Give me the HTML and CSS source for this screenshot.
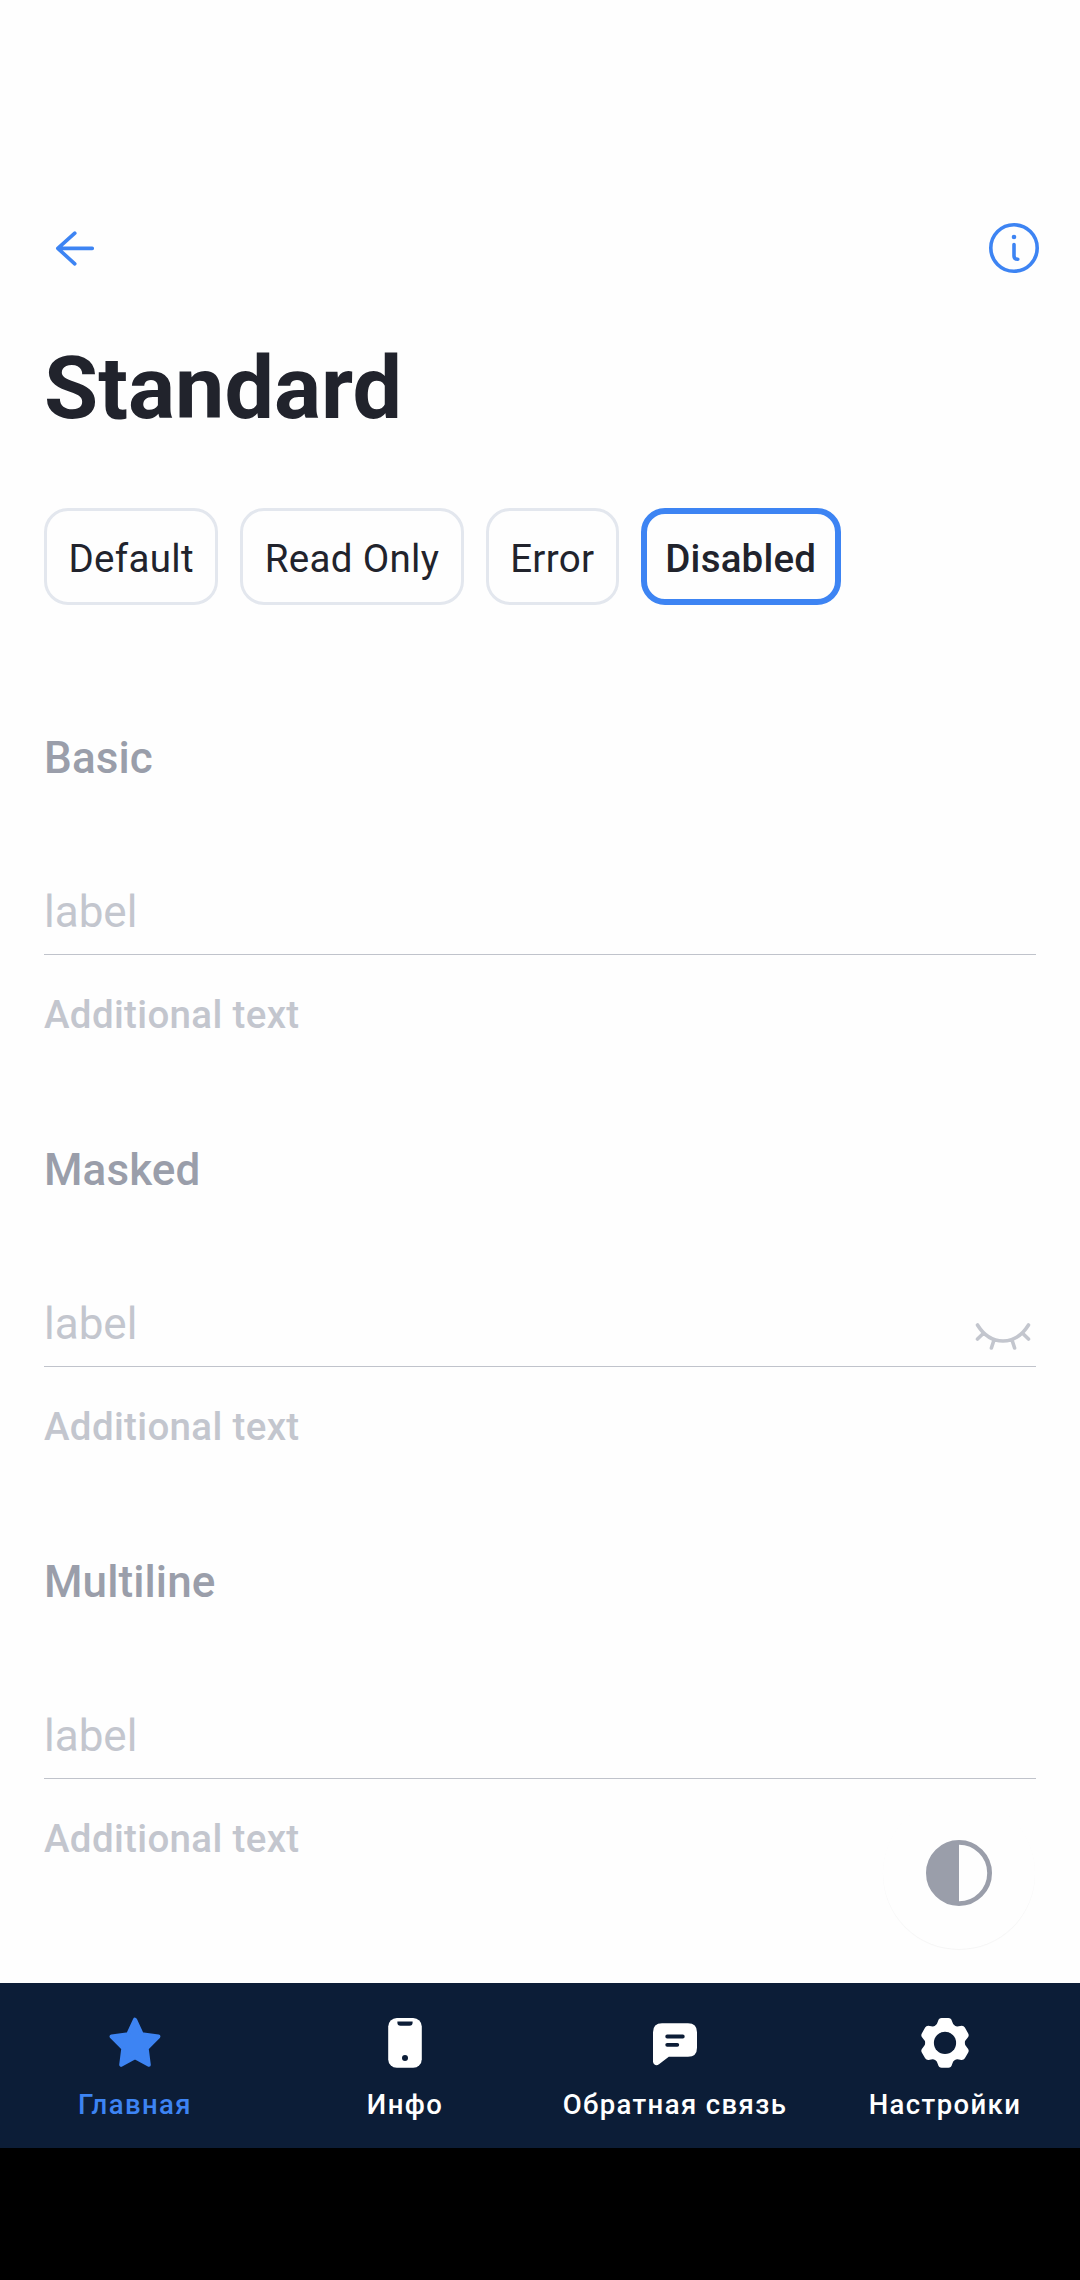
FILE: index.html
```html
<!DOCTYPE html>
<html lang="ru">
<head>
<meta charset="utf-8">
<title>Standard</title>
<link rel="stylesheet" href="styles.css">
</head>
<body>
<div class="screen">
  <header class="topbar">
    <svg class="icon icon-line" viewBox="0 0 66 66"><path d="M48.3 33.4H13.8M30.8 18.2L13.8 33.4L30.8 48.8"/></svg>
    <svg class="icon icon-line icon-info" viewBox="0 0 66 66"><circle cx="33" cy="33" r="23.2"/><path d="M33 29.5V41Q33 44.3 36.8 44.3"/><circle class="dot" cx="33" cy="22" r="2.3"/></svg>
  </header>
  <main class="content">
    <h1 class="title">Standard</h1>
    <div class="chips">
      <button class="chip">Default</button>
      <button class="chip">Read Only</button>
      <button class="chip">Error</button>
      <button class="chip chip-selected">Disabled</button>
    </div>
    <section class="group">
      <h2 class="group-title">Basic</h2>
      <div class="field"><span class="label">label</span></div>
      <p class="hint">Additional text</p>
    </section>
    <section class="group">
      <h2 class="group-title">Masked</h2>
      <div class="field">
        <span class="label">label</span>
        <svg class="icon icon-eye" viewBox="0 0 66 66"><path d="M7.5 27C14 37.5 22.5 43 33 43S52 37.5 58.5 27M13.5 35.2L7.5 41M24 42L21.4 50M42 42L44.6 50M52.5 35.2L58.5 41"/></svg>
      </div>
      <p class="hint">Additional text</p>
    </section>
    <section class="group">
      <h2 class="group-title">Multiline</h2>
      <div class="field"><span class="label">label</span></div>
      <p class="hint">Additional text</p>
    </section>
  </main>
  <button class="fab">
    <svg class="icon" viewBox="0 0 66 66"><circle class="ring" cx="33" cy="33" r="30.6"/><path class="half" d="M33 2A31 31 0 0 0 33 64Z"/></svg>
  </button>
  <nav class="tabs">
    <a class="tab tab-active">
      <svg class="icon" viewBox="0 0 66 66"><path class="star" d="M33 9.7L39.7 24.2L56.4 26.5L44.7 38.3L46.8 54.8L33 47.2L19.2 54.8L21.3 38.3L9.6 26.5L26.3 24.2Z"/></svg>
      <span>Главная</span>
    </a>
    <a class="tab">
      <svg class="icon" viewBox="0 0 66 66"><rect class="solid" x="16.2" y="8" width="33.6" height="49.8" rx="8.6"/><path class="hole" d="M25.4 11.6H40.6V12.8Q40.6 15.7 37.5 15.7H28.5Q25.4 15.7 25.4 12.8Z"/><circle class="hole" cx="33" cy="48" r="3"/></svg>
      <span>Инфо</span>
    </a>
    <a class="tab">
      <svg class="icon" viewBox="0 0 66 66"><path class="solid" d="M20 13.3H46Q55 13.3 55 22.3V37.7Q55 46.7 46 46.7H26.8L17 54.2Q14.6 56 12.5 54.6Q11 53.7 11 51.5V22.3Q11 13.3 20 13.3Z"/><path class="slot" d="M25.2 26.5H40.8M25.2 34.8H35.3"/></svg>
      <span>Обратная связь</span>
    </a>
    <a class="tab">
      <svg class="icon" viewBox="0 0 66 66">
        <defs><path id="tooth" d="M-12 -15L-10.3 -17.8Q-8.3 -18.8 -7.3 -22.5Q-6.4 -25.9 -3.5 -25.9H3.5Q6.4 -25.9 7.3 -22.5Q8.3 -18.8 10.3 -17.8L12 -15Z"/></defs>
        <g class="solid" transform="translate(33 32.9) scale(.96)">
          <circle r="19.6"/>
          <use href="#tooth"/><use href="#tooth" transform="rotate(60)"/><use href="#tooth" transform="rotate(120)"/><use href="#tooth" transform="rotate(180)"/><use href="#tooth" transform="rotate(240)"/><use href="#tooth" transform="rotate(300)"/>
        </g>
        <circle class="hole" cx="33" cy="32.9" r="11.1"/>
      </svg>
      <span>Настройки</span>
    </a>
  </nav>
  <div class="system-bar"></div>
</div>
</body>
</html>
```
FILE: styles.css
```css
* { box-sizing: border-box; }
body {
  margin: 0;
  background: #fefefe;
  color: #21232c;
  font-family: Roboto, "Liberation Sans", sans-serif;
}
button {
  margin: 0;
  font: inherit;
  color: inherit;
}
.screen {
  position: relative;
  display: flex;
  flex-direction: column;
  width: 1080px;
  height: 2280px;
}
.icon {
  display: block;
  flex: none;
  width: 66px;
  height: 66px;
}
.topbar {
  display: flex;
  justify-content: space-between;
  padding: 215px 33px 0 44px;
}
.icon-line {
  fill: none;
  stroke: #3d84f3;
  stroke-width: 3.6;
  stroke-linecap: round;
  stroke-linejoin: round;
}
.icon-line .dot {
  fill: #3d84f3;
  stroke: none;
}
.content {
  flex: 1;
  padding: 55px 44px 0;
}
.title {
  margin: 0;
  font-size: 88px;
  line-height: 104px;
  font-weight: 700;
}
.chips {
  display: flex;
  gap: 22px;
  margin-top: 68px;
}
.chip {
  height: 97px;
  padding: 25px 21.5px 20px;
  border: 3px solid #e3e7ee;
  border-radius: 24px;
  background: #fefefe;
  font-size: 38.5px;
  line-height: 46px;
  letter-spacing: 0.3px;
  white-space: nowrap;
}
.chip-selected {
  padding: 22px 18.5px 17px;
  border: 6px solid #3d84f3;
  font-weight: 500;
  letter-spacing: 0.2px;
}
.group {
  height: 412px;
}
.chips + .group {
  margin-top: 127px;
}
.group-title {
  margin: 0;
  color: #9a9eaa;
  font-size: 44px;
  line-height: 52px;
  font-weight: 500;
  letter-spacing: 0.1px;
}
.field {
  display: flex;
  justify-content: space-between;
  height: 69px;
  margin-top: 102px;
  border-bottom: 1px solid #c0c3cb;
}
.label {
  color: #c3c6ce;
  font-size: 44px;
  line-height: 52px;
}
.icon-eye {
  fill: none;
  stroke: #c3c6ce;
  stroke-width: 3.6;
  stroke-linecap: round;
}
.hint {
  margin: 37px 0 0;
  color: #c3c6ce;
  font-size: 38.5px;
  line-height: 46px;
  font-weight: 500;
  letter-spacing: 0.34px;
}
.fab {
  position: absolute;
  right: 45px;
  bottom: 331px;
  display: flex;
  align-items: center;
  justify-content: center;
  width: 152px;
  height: 152px;
  padding: 0;
  border: 0;
  border-radius: 50%;
  background: #fefefe;
  box-shadow: 0 1px 1px rgba(0, 0, 0, 0.04);
}
.ring {
  fill: none;
  stroke: #9a9eaa;
  stroke-width: 4.8;
}
.half {
  fill: #9a9eaa;
}
.tabs {
  display: grid;
  grid-template-columns: repeat(4, 1fr);
  height: 165px;
  padding-top: 27px;
  background: #0c1d37;
}
.tab {
  display: flex;
  flex-direction: column;
  align-items: center;
  gap: 12px;
  color: #fff;
  font-size: 27.5px;
  line-height: 34px;
  font-weight: 500;
  letter-spacing: 1.4px;
  white-space: nowrap;
}
.tab-active {
  color: #3d84f3;
}
.star {
  fill: #3d84f3;
  stroke: #3d84f3;
  stroke-width: 4;
  stroke-linejoin: round;
}
.solid {
  fill: #fff;
}
.hole {
  fill: #0c1d37;
}
.slot {
  fill: none;
  stroke: #0c1d37;
  stroke-width: 3.8;
  stroke-linecap: round;
}
.system-bar {
  height: 132px;
  background: #000;
}
```
